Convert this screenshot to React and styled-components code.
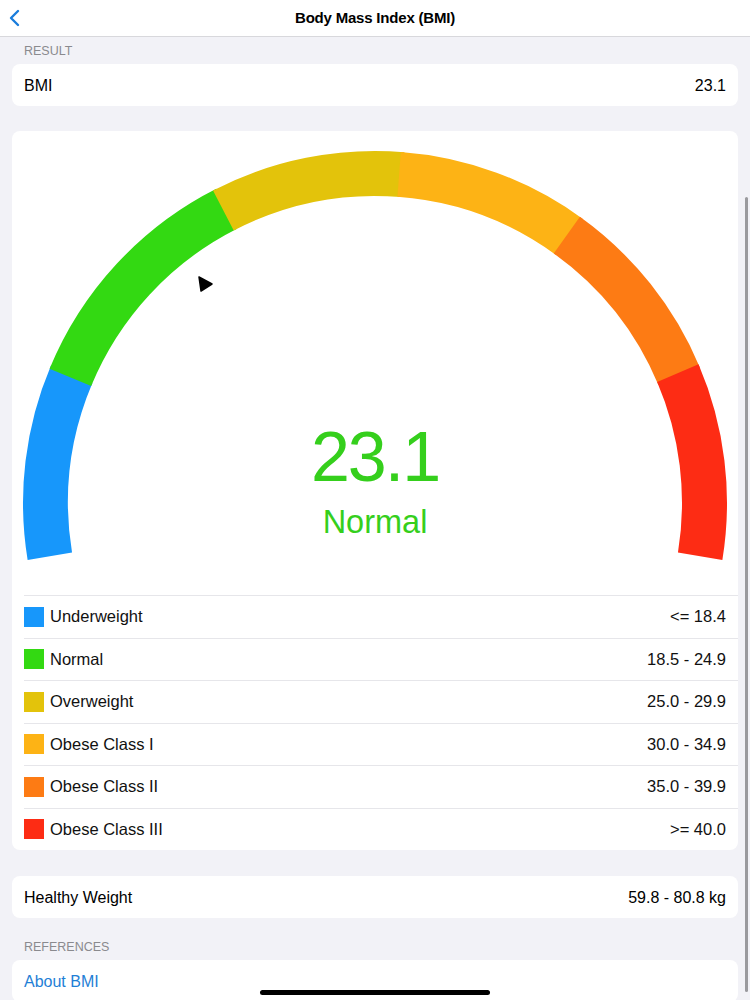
import React from "react";
import styled, { createGlobalStyle } from "styled-components";

const GlobalStyle = createGlobalStyle`
  html, body {
    margin: 0;
    padding: 0;
    background: #f2f2f7;
    font-family: "Liberation Sans", Helvetica, Arial, sans-serif;
    -webkit-font-smoothing: antialiased;
  }
`;

const Screen = styled.div`
  position: relative;
  width: 750px;
  height: 1000px;
  overflow: hidden;
  background: #f2f2f7;
  color: #000;
`;

const NavBar = styled.div`
  height: 36px;
  background: #fff;
  border-bottom: 1px solid #d8d8dc;
  display: flex;
  align-items: center;
  justify-content: center;
  position: relative;
`;

const BackButton = styled.div`
  position: absolute;
  left: 7px;
  top: 9px;
  width: 16px;
  height: 18px;
  display: flex;
`;

const NavTitle = styled.div`
  font-size: 15px;
  font-weight: 700;
  letter-spacing: -0.2px;
  margin-top: -1px;
`;

const Content = styled.div`
  padding: 0 12px;
`;

const SectionHeader = styled.div`
  padding: ${(p) => p.$top}px 12px 5px;
  font-size: 12.5px;
  line-height: 15px;
  color: #8a8a8e;
  text-transform: uppercase;
`;

const Card = styled.div`
  background: #fff;
  border-radius: 8px;
  margin-top: ${(p) => p.$mt || 0}px;
  overflow: hidden;
`;

const Row = styled.div`
  height: 42px;
  display: flex;
  align-items: center;
  justify-content: space-between;
  padding: 1px 12px 0;
  box-sizing: border-box;
  font-size: 16px;
`;

const LinkText = styled.span`
  color: #1f7fd6;
`;

const GaugeArea = styled.div`
  position: relative;
  height: 464px;
`;

const GaugeSvg = styled.svg`
  display: block;
`;

const Reading = styled.div`
  position: absolute;
  left: 0;
  right: 0;
  top: 286px;
  display: flex;
  flex-direction: column;
  align-items: center;
  color: #35cf1c;
`;

const ReadingValue = styled.div`
  font-size: 70px;
  line-height: 80px;
  letter-spacing: -2px;
`;

const ReadingLabel = styled.div`
  font-size: 32.5px;
  line-height: 40px;
  margin-top: 5px;
`;

const Legend = styled.div`
  margin-left: 12px;
`;

const LegendRow = styled.div`
  box-sizing: border-box;
  height: 42.5px;
  border-top: 1px solid #e6e6ea;
  display: flex;
  align-items: center;
  padding-right: 12px;
  font-size: 16.5px;
  color: #111;
`;

const Swatch = styled.span`
  width: 20px;
  height: 20px;
  background: ${(p) => p.$color};
  margin-right: 6px;
  flex: none;
`;

const LegendName = styled.span`
  flex: 1;
`;

const ScrollIndicator = styled.div`
  position: absolute;
  right: 2px;
  top: 197px;
  width: 3px;
  height: 795px;
  border-radius: 2px;
  background: #9a9a9e;
`;

const HomeIndicator = styled.div`
  position: absolute;
  left: 260px;
  bottom: 5px;
  width: 230px;
  height: 5px;
  border-radius: 3px;
  background: #000;
`;

const categories = [
  { name: "Underweight", range: "<= 18.4", color: "#1797fb", from: -9, to: 22.7 },
  { name: "Normal", range: "18.5 - 24.9", color: "#33d912", from: 22.7, to: 62.9 },
  { name: "Overweight", range: "25.0 - 29.9", color: "#e3c30b", from: 62.9, to: 94.5 },
  { name: "Obese Class I", range: "30.0 - 34.9", color: "#fdb315", from: 94.5, to: 125.9 },
  { name: "Obese Class II", range: "35.0 - 39.9", color: "#fd7b14", from: 125.9, to: 157.1 },
  { name: "Obese Class III", range: ">= 40.0", color: "#fd2c14", from: 157.1, to: 189 },
];

const CX = 363;
const CY = 372;
const R = 329.5;

const point = (deg, r) => {
  const a = (deg * Math.PI) / 180;
  return [CX - r * Math.cos(a), CY - r * Math.sin(a)];
};

const arcPath = (from, to) => {
  const [x1, y1] = point(from - 0.3, R);
  const [x2, y2] = point(to + 0.3, R);
  return `M ${x1} ${y1} A ${R} ${R} 0 0 1 ${x2} ${y2}`;
};

const Gauge = () => (
  <GaugeArea>
    <GaugeSvg width="726" height="464" viewBox="0 0 726 464">
      {categories.map((c) => (
        <path
          key={c.name}
          d={arcPath(c.from, c.to)}
          stroke={c.color}
          strokeWidth="45"
          fill="none"
        />
      ))}
      <polygon points="187,146 200,153 189,160" fill="#000" strokeLinejoin="round" stroke="#000" strokeWidth="1.5" />
    </GaugeSvg>
    <Reading>
      <ReadingValue>23.1</ReadingValue>
      <ReadingLabel>Normal</ReadingLabel>
    </Reading>
  </GaugeArea>
);

export default function App() {
  return (
    <Screen>
      <GlobalStyle />
      <NavBar>
        <BackButton>
          <svg width="16" height="18" viewBox="0 0 16 18">
            <path
              d="M11 2 L4 9 L11 16"
              stroke="#1a7ddc"
              strokeWidth="2.4"
              fill="none"
              strokeLinecap="round"
              strokeLinejoin="round"
            />
          </svg>
        </BackButton>
        <NavTitle>Body Mass Index (BMI)</NavTitle>
      </NavBar>
      <Content>
        <SectionHeader $top={7}>Result</SectionHeader>
        <Card>
          <Row>
            <span>BMI</span>
            <span>23.1</span>
          </Row>
        </Card>
        <Card $mt={25}>
          <Gauge />
          <Legend>
            {categories.map((c) => (
              <LegendRow key={c.name}>
                <Swatch $color={c.color} />
                <LegendName>{c.name}</LegendName>
                <span>{c.range}</span>
              </LegendRow>
            ))}
          </Legend>
        </Card>
        <Card $mt={26}>
          <Row>
            <span>Healthy Weight</span>
            <span>59.8 - 80.8 kg</span>
          </Row>
        </Card>
        <SectionHeader $top={22}>References</SectionHeader>
        <Card>
          <Row>
            <LinkText>About BMI</LinkText>
          </Row>
        </Card>
      </Content>
      <ScrollIndicator />
      <HomeIndicator />
    </Screen>
  );
}
